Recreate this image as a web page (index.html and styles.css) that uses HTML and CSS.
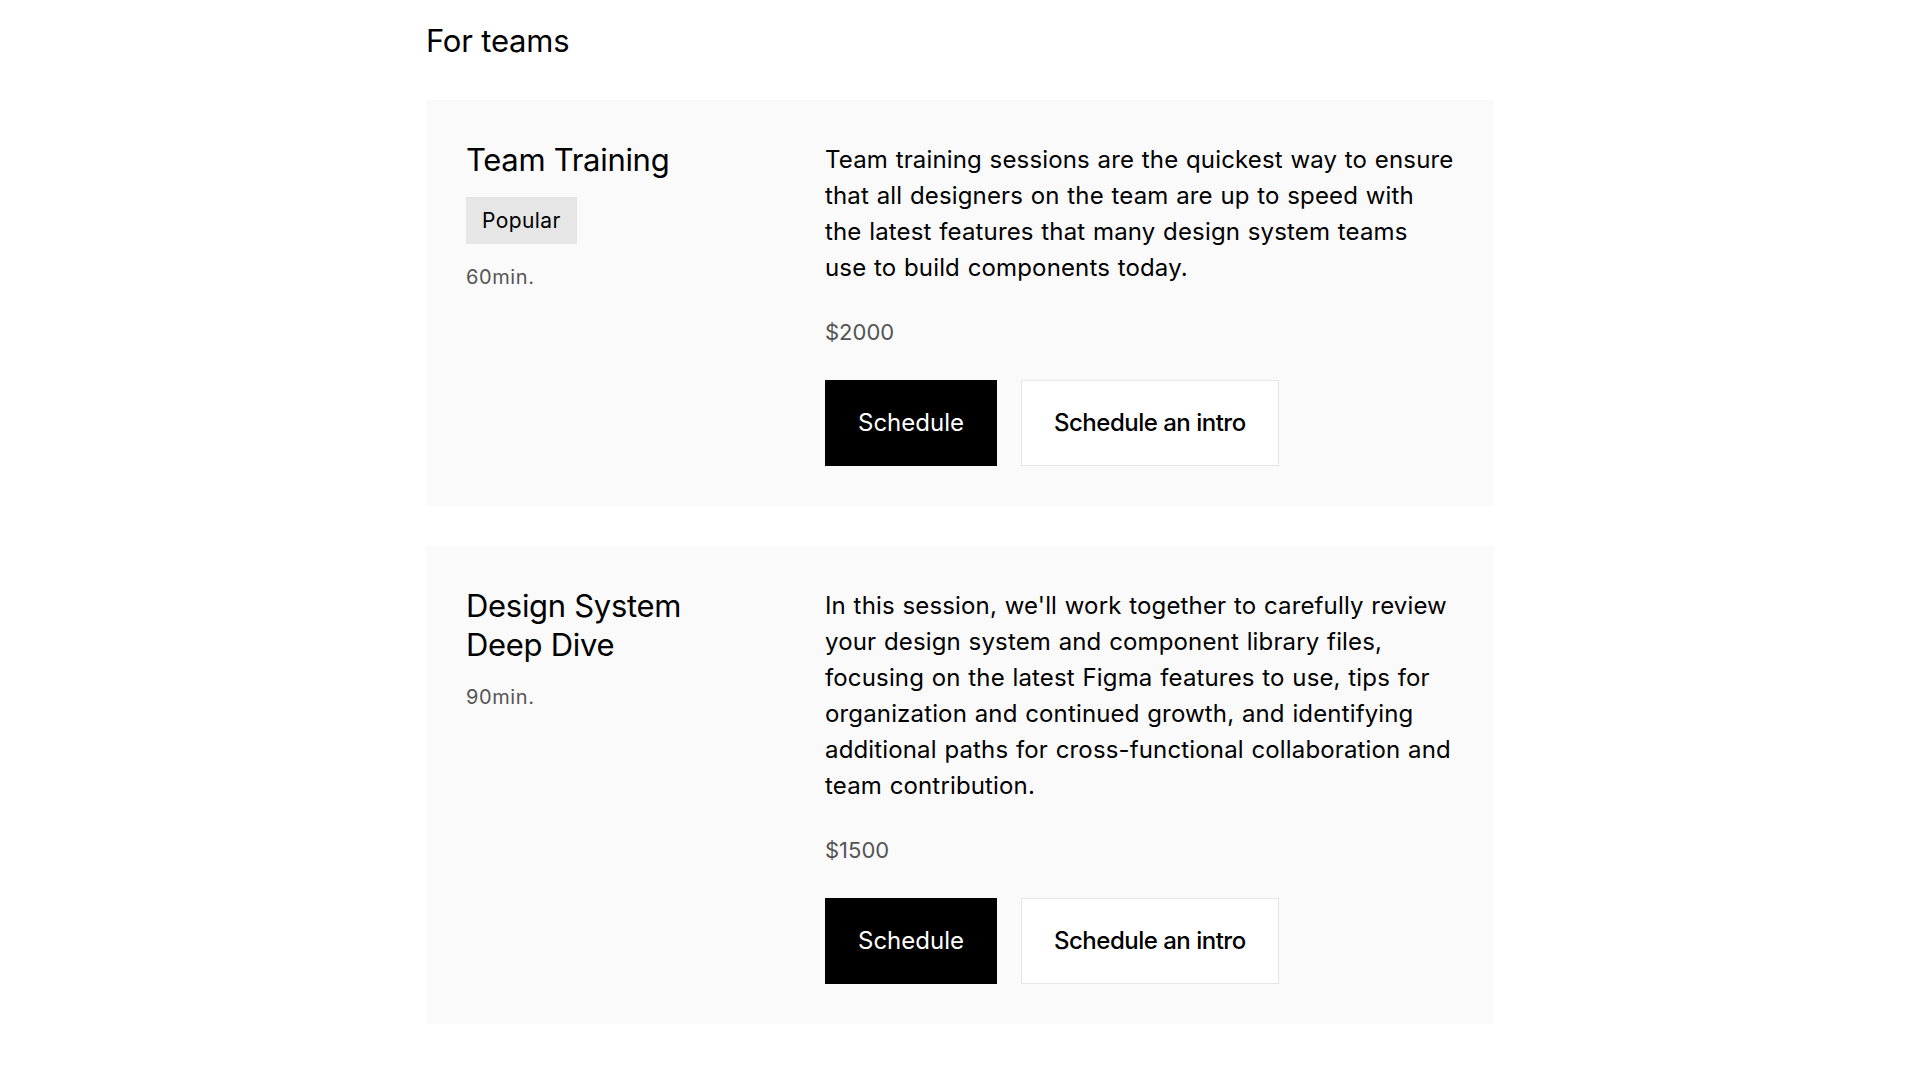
FILE: index.html
```html
<!DOCTYPE html>
<html lang="en">

<head>
    <meta charset="UTF-8">
    <meta name="viewport" content="width=device-width, initial-scale=1.0">
    <title>For teams</title>
    <link rel="stylesheet" href="styles.css">
</head>

<body>
    <main class="page">
        <h2 class="section-title">For teams</h2>

        <div class="offer">
            <div class="offer-info">
                <h3 class="offer-name">Team Training</h3>
                <span class="tag">Popular</span>
                <span class="duration">60min.</span>
            </div>
            <div class="offer-body">
                <p class="offer-text">Team training sessions are the quickest way to ensure that all designers on the team are up to speed with the latest features that many design system teams use to build components today.</p>
                <p class="price">$2000</p>
                <div class="actions">
                    <a href="#" class="btn btn-dark">Schedule</a>
                    <a href="#" class="btn btn-light">Schedule an intro</a>
                </div>
            </div>
        </div>

        <div class="offer">
            <div class="offer-info">
                <h3 class="offer-name">Design System Deep Dive</h3>
                <span class="duration">90min.</span>
            </div>
            <div class="offer-body">
                <p class="offer-text">In this session, we'll work together to carefully review your design system and component library files, focusing on the latest Figma features to use, tips for organization and continued growth, and identifying additional paths for cross-functional collaboration and team contribution.</p>
                <p class="price">$1500</p>
                <div class="actions">
                    <a href="#" class="btn btn-dark">Schedule</a>
                    <a href="#" class="btn btn-light">Schedule an intro</a>
                </div>
            </div>
        </div>
    </main>
</body>

</html>
```

FILE: styles.css
```css
body {
    margin: 0;
    font-family: Inter, "Liberation Sans", Arial, sans-serif;
    color: #000;
    background: #fff;
}

.page {
    max-width: 1068px;
    margin: 0 auto;
    padding: 22px 0 40px;
}

.section-title {
    margin: 0 0 40px;
    font-size: 31px;
    font-weight: 400;
    line-height: 38px;
    letter-spacing: -0.2px;
}

.offer {
    display: grid;
    grid-template-columns: 1fr 629px;
    gap: 60px;
    padding: 40px;
    margin-bottom: 40px;
    background: #fafafa;
}

.offer-info {
    display: flex;
    flex-direction: column;
    align-items: flex-start;
    gap: 18px;
}

.offer-name {
    margin: 0;
    font-size: 31px;
    font-weight: 400;
    line-height: 39px;
    letter-spacing: -0.3px;
}

.tag {
    padding: 8px 16px;
    background: #e6e6e6;
    font-size: 21px;
    line-height: 31px;
    letter-spacing: 0.4px;
}

.duration {
    font-size: 20px;
    line-height: 30px;
    color: #555;
    letter-spacing: 0.6px;
}

.offer-text {
    margin: 0;
    padding-top: 2px;
    font-size: 24px;
    line-height: 36px;
    letter-spacing: 0.15px;
    word-spacing: 0.8px;
}

.price {
    margin: 30px 0 32px;
    font-size: 22px;
    line-height: 32px;
    color: #555;
}

.actions {
    display: flex;
    gap: 24px;
}

.btn {
    padding: 24px 32px;
    border: 1px solid #e6e6e6;
    font-size: 24px;
    line-height: 36px;
    text-decoration: none;
}

.btn-dark {
    background: #000;
    border-color: #000;
    color: #fff;
}

.btn-light {
    background: #fff;
    color: #000;
    font-weight: 500;
    letter-spacing: -0.5px;
}
```
